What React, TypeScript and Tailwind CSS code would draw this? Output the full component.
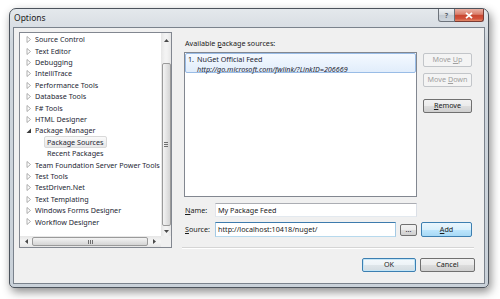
import React from 'react';

type TreeRow = { label: string; kind: 'collapsed' | 'expanded' | 'child'; selected?: boolean };

const rows: TreeRow[] = [
  { label: 'Source Control', kind: 'collapsed' },
  { label: 'Text Editor', kind: 'collapsed' },
  { label: 'Debugging', kind: 'collapsed' },
  { label: 'IntelliTrace', kind: 'collapsed' },
  { label: 'Performance Tools', kind: 'collapsed' },
  { label: 'Database Tools', kind: 'collapsed' },
  { label: 'F# Tools', kind: 'collapsed' },
  { label: 'HTML Designer', kind: 'collapsed' },
  { label: 'Package Manager', kind: 'expanded' },
  { label: 'Package Sources', kind: 'child', selected: true },
  { label: 'Recent Packages', kind: 'child' },
  { label: 'Team Foundation Server Power Tools', kind: 'collapsed' },
  { label: 'Test Tools', kind: 'collapsed' },
  { label: 'TestDriven.Net', kind: 'collapsed' },
  { label: 'Text Templating', kind: 'collapsed' },
  { label: 'Windows Forms Designer', kind: 'collapsed' },
  { label: 'Workflow Designer', kind: 'collapsed' },
];

const font = 'font-["Noto_Sans","Open_Sans",sans-serif]';

const Arrow = ({ kind }: { kind: TreeRow['kind'] }) => {
  if (kind === 'expanded') {
    return (
      <svg width="6" height="6" viewBox="0 0 6 6">
        <polygon points="5,0.5 5,5 0.5,5" fill="#3a3a3a" />
      </svg>
    );
  }
  return (
    <svg width="6" height="7" viewBox="0 0 6 7">
      <polygon points="1,0.5 4.5,3.5 1,6.5" fill="#ffffff" stroke="#a6a6a6" strokeWidth="0.9" />
    </svg>
  );
};

const WinButton = ({
  children,
  className = '',
  disabled = false,
  variant = 'normal',
}: {
  children: React.ReactNode;
  className?: string;
  disabled?: boolean;
  variant?: 'normal' | 'hot' | 'default';
}) => {
  let look =
    'border-[#707070] bg-[linear-gradient(#f2f2f2_0%,#ebebeb_50%,#dddddd_51%,#cfcfcf_100%)] text-[#1b1b1b]';
  if (disabled) look = 'border-[#c2c5c9] bg-[#f4f4f4] text-[#a0a0a0]';
  if (variant === 'hot')
    look =
      'border-[#3c7fb1] bg-[linear-gradient(#eaf6fd_0%,#d9f0fc_50%,#bee6fd_51%,#a7d9f5_100%)] text-[#1b1b1b]';
  if (variant === 'default')
    look =
      'border-[#3c7fb1] bg-[linear-gradient(#f4f9fc_0%,#edf3f7_50%,#dfe6ea_51%,#d3dce2_100%)] text-[#1b1b1b] shadow-[inset_0_0_0_1px_#c4e5f6]';
  return (
    <div
      className={`flex shrink-0 items-center justify-center rounded-[2px] border text-[7.2px] leading-none ${look} ${className}`}
    >
      <span className="whitespace-pre">{children}</span>
    </div>
  );
};

const ScrollGrip = ({ vertical }: { vertical: boolean }) =>
  vertical ? (
    <div className="flex flex-col gap-[1px]">
      <div className="h-[1px] w-[4px] bg-[#6f6f6f]" />
      <div className="h-[1px] w-[4px] bg-[#6f6f6f]" />
      <div className="h-[1px] w-[4px] bg-[#6f6f6f]" />
    </div>
  ) : (
    <div className="flex gap-[1px]">
      <div className="h-[4px] w-[1px] bg-[#6f6f6f]" />
      <div className="h-[4px] w-[1px] bg-[#6f6f6f]" />
      <div className="h-[4px] w-[1px] bg-[#6f6f6f]" />
    </div>
  );

const TreeView = () => (
  <div className="ml-[5px] mt-[4px] flex h-[216px] w-[153px] shrink-0 flex-col border border-[#828790] bg-white">
    <div className="flex flex-1 overflow-hidden">
      <div className="flex flex-1 flex-col overflow-hidden pt-[1px]">
        {rows.map((r) => (
          <div key={r.label} className="flex h-[11.4px] shrink-0 items-center whitespace-nowrap">
            {r.kind === 'child' ? (
              <div
                className={`ml-[24px] flex h-[12px] shrink-0 items-center rounded-[2px] border px-[2px] ${
                  r.selected
                    ? 'border-[#d9d9d9] bg-[linear-gradient(#fafafa,#e8e8e8)]'
                    : 'border-transparent'
                }`}
              >
                <span className="text-[7.2px] text-[#1e2633]">{r.label}</span>
              </div>
            ) : (
              <>
                <div className="ml-[6px] flex w-[9px] shrink-0 items-center">
                  <Arrow kind={r.kind} />
                </div>
                <span className="shrink-0 text-[7.2px] text-[#1e2633]">{r.label}</span>
              </>
            )}
          </div>
        ))}
      </div>
      {/* vertical scrollbar */}
      <div className="flex w-[10px] shrink-0 flex-col items-center bg-[linear-gradient(90deg,#e6e6e6,#f3f3f3_40%,#f3f3f3_60%,#e6e6e6)]">
        <div className="flex h-[14px] items-center justify-center">
          <svg width="5" height="3" viewBox="0 0 5 3">
            <polygon points="0,3 2.5,0 5,3" fill="#4a4a4a" />
          </svg>
        </div>
        <div className="mt-[16px] flex h-[163px] w-[9px] items-center justify-center rounded-[2px] border border-[#9a9a9a] bg-[linear-gradient(90deg,#f4f4f4,#e4e4e4_50%,#d4d4d4)]">
          <ScrollGrip vertical />
        </div>
        <div className="flex flex-1 items-center justify-center">
          <svg width="5" height="3" viewBox="0 0 5 3">
            <polygon points="0,0 2.5,3 5,0" fill="#4a4a4a" />
          </svg>
        </div>
      </div>
    </div>
    {/* horizontal scrollbar */}
    <div className="flex h-[11px] shrink-0">
      <div className="flex flex-1 items-center bg-[linear-gradient(#e6e6e6,#f3f3f3_40%,#f3f3f3_60%,#e6e6e6)]">
        <div className="flex w-[12px] items-center justify-center">
          <svg width="3" height="5" viewBox="0 0 3 5">
            <polygon points="3,0 0,2.5 3,5" fill="#4a4a4a" />
          </svg>
        </div>
        <div className="flex h-[9px] w-[116px] items-center justify-center rounded-[2px] border border-[#9a9a9a] bg-[linear-gradient(#f4f4f4,#e4e4e4_50%,#d4d4d4)]">
          <ScrollGrip vertical={false} />
        </div>
        <div className="flex flex-1 items-center justify-center">
          <svg width="3" height="5" viewBox="0 0 3 5">
            <polygon points="0,0 3,2.5 0,5" fill="#4a4a4a" />
          </svg>
        </div>
      </div>
      <div className="w-[10px] bg-[#f0f0f0]" />
    </div>
  </div>
);

export default function App() {
  return (
    <div className={`h-[299px] w-[500px] overflow-hidden bg-white pl-[9px] pt-[8px] ${font}`}>
      <div className="flex h-[280px] w-[480px] flex-col rounded-t-[7px] rounded-b-[5px] border border-[#4c535c] bg-[linear-gradient(#e4e8ec,#cfd6dd_12%,#c9d1d9)] shadow-[2px_4px_10px_rgba(0,0,0,0.45)]">
        {/* title bar */}
        <div className="flex h-[18px] shrink-0 items-start justify-between">
          <span className="ml-[4px] mt-[4px] text-[8.5px] leading-[10px] text-[#1b1b1b]">Options</span>
          <div className="mr-[4px] flex">
            <div className="flex h-[13px] w-[17px] items-center justify-center rounded-bl-[3px] border border-t-0 border-[#6d737b] bg-[linear-gradient(#eef1f4,#d3d9df_50%,#c3cad2_51%,#cfd6dd)]">
              <span className="text-[7px] font-bold leading-none text-[#5a626b]">?</span>
            </div>
            <div className="flex h-[13px] w-[29px] items-center justify-center rounded-br-[3px] border border-l-0 border-t-0 border-[#7a3b33] bg-[linear-gradient(#eab1a4,#d97d6b_45%,#c7452f_50%,#d2523c_80%,#e28a6a)]">
              <svg width="8" height="7" viewBox="0 0 8 7">
                <path d="M1 0.8 L7 6.2 M7 0.8 L1 6.2" stroke="#ffffff" strokeWidth="1.8" />
              </svg>
            </div>
          </div>
        </div>
        {/* client area */}
        <div className="mx-[3px] flex h-[257px] shrink-0 border border-[#7a828c] bg-[#f0f0f0]">
          <TreeView />
          <div className="ml-[10px] flex w-[293px] flex-col">
            <div className="ml-[3px] mt-[10px] h-[10px] text-[7.2px] leading-[10px] text-[#1b1b1b]">
              Available <span className="underline">p</span>ackage sources:
            </div>
            <div className="mt-[4px] flex">
              <div className="ml-[2px] h-[145px] w-[233px] border border-[#828790] bg-white">
                <div className="h-[20px] rounded-[2px] border border-[#99bce6] bg-[linear-gradient(#f4f9ff,#e1edfb)] pl-[2px] pt-[1px] text-[7.2px] leading-[9.5px] text-[#1e2633]">
                  <div className="flex">
                    <span className="w-[9px]">1.</span>
                    <span>NuGet Official Feed</span>
                  </div>
                  <div className="pl-[9px] italic">http://go.microsoft.com/fwlink/?LinkID=206669</div>
                </div>
              </div>
              <div className="ml-[6px] flex w-[49px] flex-col">
                <WinButton disabled className="mt-[1px] h-[14px]">
                  Move <span className="underline">U</span>p
                </WinButton>
                <WinButton disabled className="mt-[6px] h-[14px]">
                  Move <span className="underline">D</span>own
                </WinButton>
                <WinButton className="mt-[12px] h-[14px]">
                  <span className="underline">R</span>emove
                </WinButton>
              </div>
            </div>
            <div className="mt-[6px] flex items-center">
              <span className="ml-[3px] w-[30px] text-[7.2px] text-[#1b1b1b]">
                <span className="underline">N</span>ame:
              </span>
              <div className="flex h-[14px] w-[202px] items-center border border-[#abadb3] border-l-[#e2e3ea] border-r-[#dbdfe6] border-b-[#e3e9ef] bg-white pl-[2px] text-[7.2px] text-[#1b1b1b]">
                My Package Feed
              </div>
            </div>
            <div className="mt-[5px] flex items-center">
              <span className="ml-[3px] w-[30px] text-[7.2px] text-[#1b1b1b]">
                <span className="underline">S</span>ource:
              </span>
              <div className="flex h-[15px] w-[181px] items-center border border-[#3d7bad] border-l-[#a4c9e3] border-r-[#a4c9e3] border-b-[#b7d9ed] bg-white pl-[2px] text-[7.2px] text-[#1b1b1b]">
                http://localhost:10418/nuget/
              </div>
              <WinButton className="ml-[4px] h-[12px] w-[17px]">...</WinButton>
              <WinButton variant="hot" className="ml-[4px] h-[15px] w-[51px]">
                <span className="underline">A</span>dd
              </WinButton>
            </div>
            <div className="mt-[10px] h-[2px] w-[292px] border-t border-b border-t-[#d5d5d5] border-b-white" />
            <div className="mt-[9px] flex justify-end gap-[4px]">
              <WinButton variant="default" className="h-[14px] w-[54px]">
                OK
              </WinButton>
              <WinButton className="h-[14px] w-[55px]">Cancel</WinButton>
            </div>
          </div>
        </div>
      </div>
    </div>
  );
}
